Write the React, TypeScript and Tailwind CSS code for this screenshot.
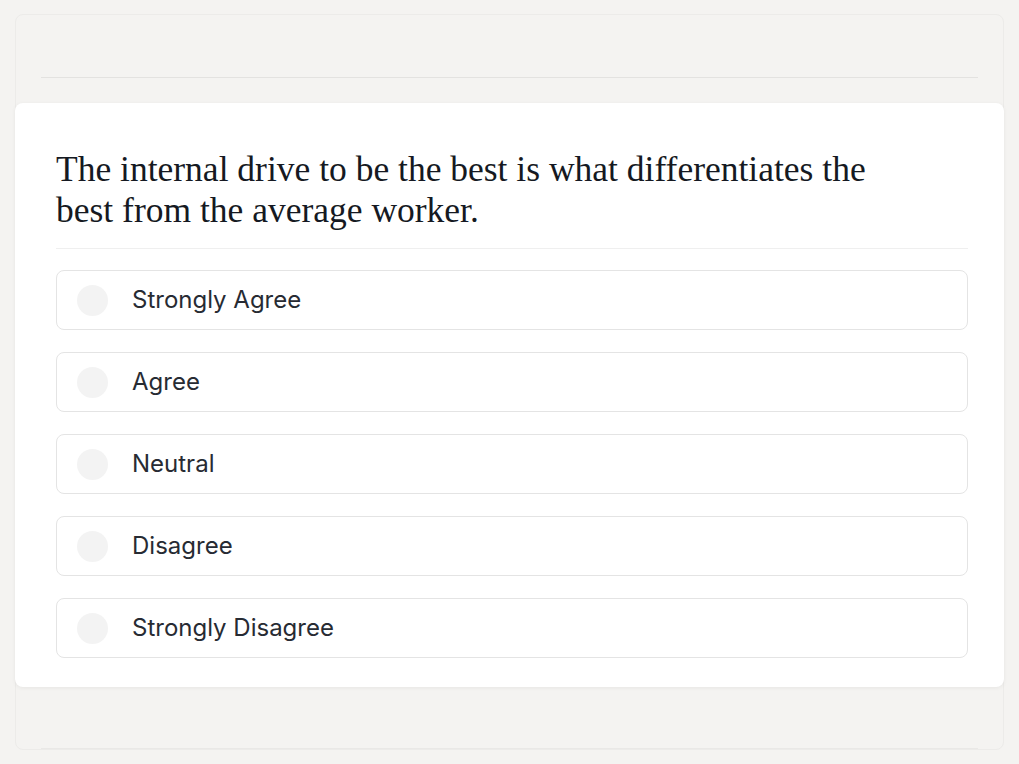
import React from 'react';

const options = ['Strongly Agree', 'Agree', 'Neutral', 'Disagree', 'Strongly Disagree'];

function Option({ label }: { label: string }) {
  return (
    <label className="flex h-[60px] items-center rounded-lg border border-[#e4e4e4] bg-white pl-[20px]">
      <span className="h-[31px] w-[31px] shrink-0 rounded-full bg-[#f3f3f3]" />
      <span className="ml-[24px] text-[24px] text-[#272b33]" style={{ fontFamily: 'Inter, "Noto Sans", sans-serif' }}>
        {label}
      </span>
    </label>
  );
}

export default function App() {
  return (
    <div className="min-h-[764px] bg-[#f4f3f1] px-[15px] pt-[14px]">
      <div className="rounded-lg border border-[#ecebe9] bg-[#f4f3f1]">
        <div className="mx-[25px] h-[63px] border-b border-[#e3e2e0]" />
        <div className="-mx-px mt-[25px] rounded-lg bg-white pl-[41px] pr-[36px] pt-[46px] pb-[29px] shadow-[0_1px_4px_rgba(0,0,0,0.06)]">
          <h1
            className="text-[35.5px] leading-[41px] text-[#151922]"
            style={{ fontFamily: '"Liberation Serif", "DejaVu Serif", serif' }}
          >
            The internal drive to be the best is what differentiates the
            <br />
            best from the average worker.
          </h1>
          <div className="mt-[17px] border-t border-[#efefef]" />
          <div className="mt-[21px] flex flex-col gap-[22px]">
            {options.map((o) => (
              <Option key={o} label={o} />
            ))}
          </div>
        </div>
        <div className="mx-[25px] h-[62px] border-b border-[#e9e8e6]" />
      </div>
    </div>
  );
}
